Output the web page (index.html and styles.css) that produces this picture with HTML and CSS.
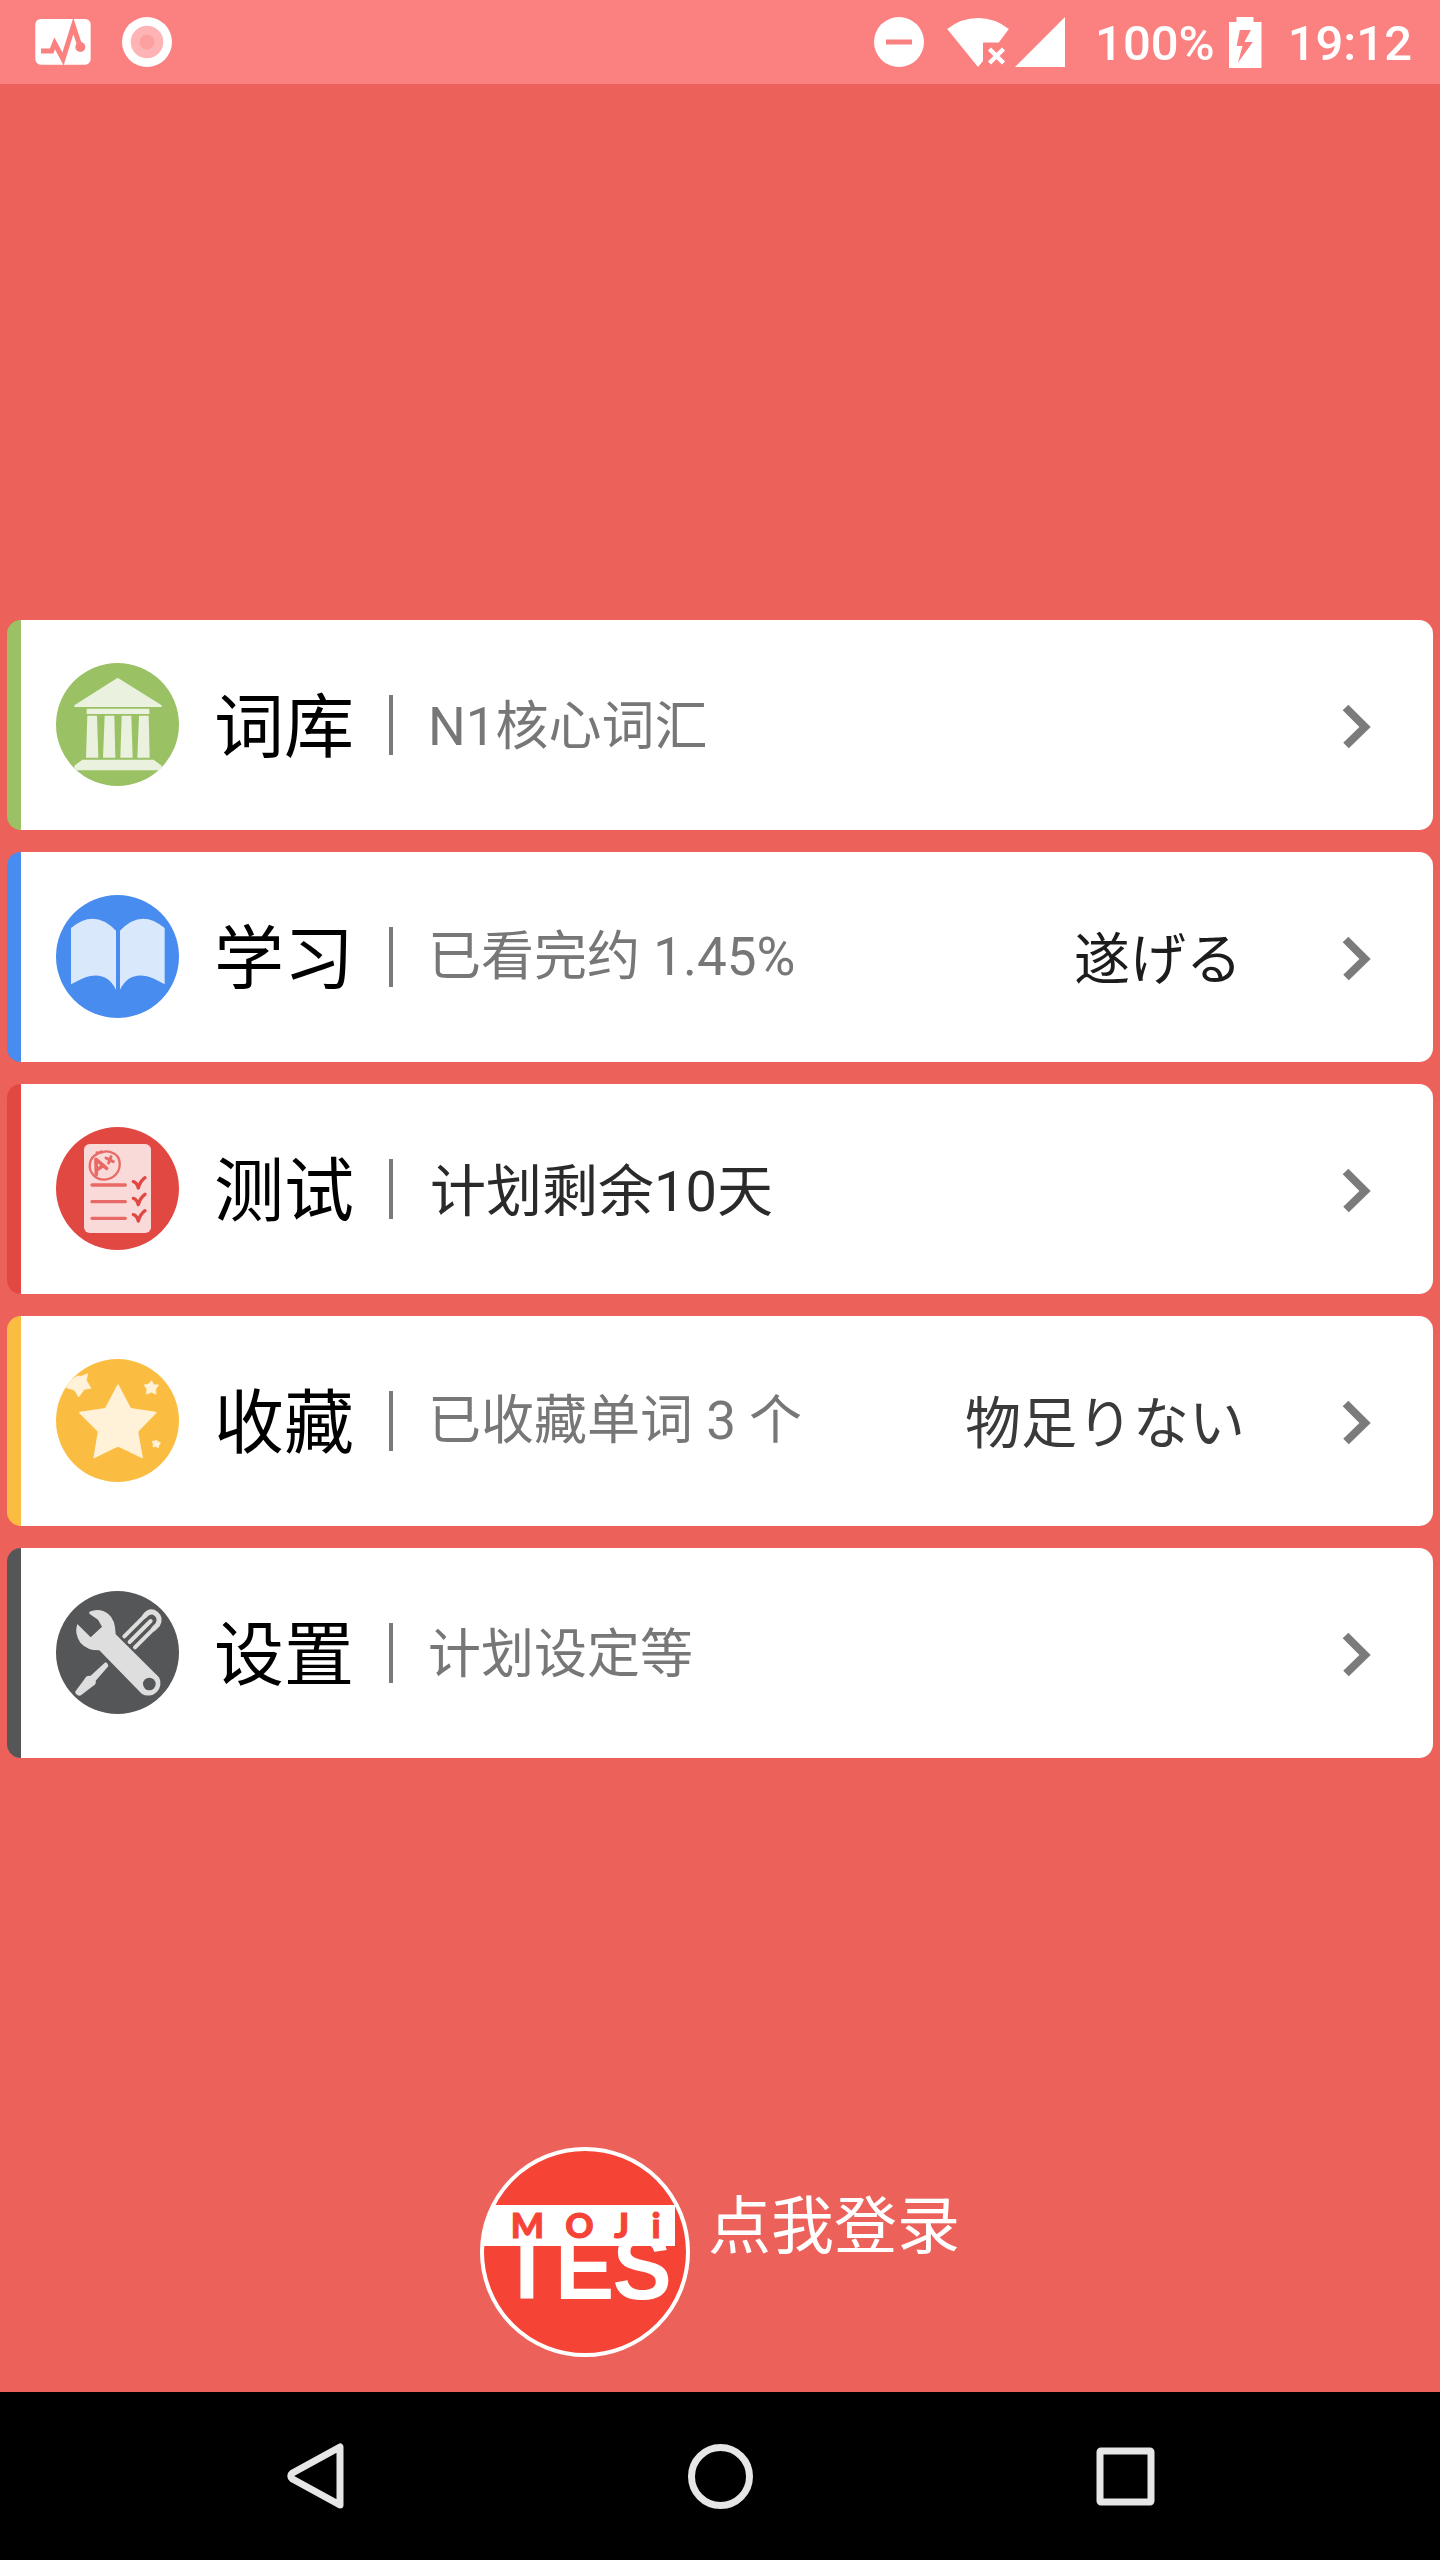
FILE: index.html
```html
<!DOCTYPE html>
<html lang="zh-CN">
<head>
<meta charset="utf-8">
<title>MOJi TEST</title>
<link rel="stylesheet" href="styles.css">
</head>
<body>
<header class="status">
  <div class="status-group">
    <svg class="ic-monitor" width="56" height="46" viewBox="105 57 168 138"><rect x="106" y="57" width="166" height="137" rx="16" fill="#fff"/><path d="M123 153h32l9-23 25 47 31-99 20 61" fill="none" stroke="#fb8080" stroke-width="15"/><circle cx="241" cy="141" r="15" fill="#fb8080"/></svg>
    <svg class="ic-record" width="50" height="50" viewBox="0 0 50 50"><circle cx="25" cy="25" r="25" fill="#fff"/><circle cx="25" cy="25" r="16.3" fill="#feb4b4"/><circle cx="25" cy="25" r="7.5" fill="#fca0a0"/></svg>
  </div>
  <div class="status-group">
    <svg class="ic-dnd" width="50" height="50" viewBox="0 0 50 50"><circle cx="25" cy="25" r="25" fill="#fff"/><path d="M12 22.500h26v5H12z" fill="#fb8080"/></svg>
    <svg class="ic-wifi" width="62" height="50" viewBox="947 17 62 50"><path d="M978 67L947.200 29Q961 18 978 18T1008.800 29L998.800 42.500H983V61Z" fill="#fff"/><path d="M989.500 49l14 14m0-14l-14 14" stroke="#fff" stroke-width="4.500"/></svg>
    <svg class="ic-cell" width="50" height="50" viewBox="0 0 50 50"><path d="M0 50L50 0v50z" fill="#fff"/></svg>
    <span class="status-text battery-text">100%</span>
    <svg class="ic-battery" width="33" height="51" viewBox="1229.500 16 33 51"><path fill-rule="evenodd" d="M1237 16h17v5h8v46h-32.500V21h7.500zM1240.300 29l-3.100 16h5.800l-4.600 16.700L1253.300 41h-8.400L1251.400 29z" fill="#fff"/></svg>
    <span class="status-text">19:12</span>
  </div>
</header>

<main class="menu">
  <a class="card card-green">
    <svg class="card-icon" viewBox="168 189 369 369"><circle cx="352.500" cy="373.500" r="184.500" fill="#9ac163"/><path d="M353 233L485 316v5H223v-5zM260 326h188v16H260zM262 347h29l4 126h-37zM314 347h29l3 126h-37zM365 347h29l4 126h-37zM417 347h29l3 126h-37zM247 479h214l24 18v8l-6 6H229l-6-8v-6z" fill="#eaf1df"/></svg>
    <h2 class="card-title">词库</h2>
    <span class="divider"></span>
    <span class="card-sub low">N1核心词汇</span>
    <svg class="chevron" width="29" height="46" viewBox="0 0 29 46"><path d="M3.500 3.500L23 23 4 41.500" fill="none" stroke="#7b7b7b" stroke-width="8"/></svg>
  </a>
  <a class="card card-blue">
    <svg class="card-icon" viewBox="168 165 369 369"><circle cx="352.500" cy="349.500" r="184.500" fill="#478cee"/><path d="M213 264Q284 204 348 272V449Q317 387 246 416L213 433zM494 264Q423 204 360 272V449Q391 387 462 416L494 433z" fill="#dae8fb"/></svg>
    <h2 class="card-title">学习</h2>
    <span class="divider"></span>
    <span class="card-sub">已看完约 1.45%</span>
    <span class="card-word word-dark">遂げる</span>
    <svg class="chevron" width="29" height="46" viewBox="0 0 29 46"><path d="M3.500 3.500L23 23 4 41.500" fill="none" stroke="#7b7b7b" stroke-width="8"/></svg>
  </a>
  <a class="card card-red">
    <svg class="card-icon" viewBox="168 171 369 369"><circle cx="352.500" cy="355.500" r="184.500" fill="#e24842"/><rect x="252" y="222" width="201" height="267" rx="17" fill="#f9dad9"/><g fill="none" stroke="#e86a66" stroke-linecap="round" stroke-linejoin="round"><path d="M276 345h100M276 395h100M276 445h100" stroke-width="10"/><path d="M290 247q8 3 14-3M294 251C266 262 262 297 281 316S331 332 348 313 362 261 343 251 314 243 300 249" stroke-width="7"/><path d="M289 313L288 268 320 295M289 301L309 287" stroke-width="11"/><path d="M318 264L340 275M333 260L326 279" stroke-width="9"/><path d="M400 335q10 2 15 19q5-20 20-31M400 385q10 2 15 19q5-20 20-31M400 434q10 2 15 19q5-20 20-31" stroke="#e24842" stroke-width="10"/></g></svg>
    <h2 class="card-title">测试</h2>
    <span class="divider"></span>
    <span class="card-sub card-plan">计划剩余10天</span>
    <svg class="chevron" width="29" height="46" viewBox="0 0 29 46"><path d="M3.500 3.500L23 23 4 41.500" fill="none" stroke="#7b7b7b" stroke-width="8"/></svg>
  </a>
  <a class="card card-yellow">
    <svg class="card-icon" viewBox="168 177 369 369"><circle cx="352.500" cy="361.500" r="184.500" fill="#fbbd41"/><g fill="#fff2d9" stroke="#fff2d9" stroke-linejoin="round"><path d="M354 256L388 321Q390 326 396 327L467 338 415 391Q412 395 413 400L426 472 361 440Q354 437 347 440L283 472 295 400Q296 395 293 391L240 338 312 327Q318 326 320 321z" stroke-width="5"/><path d="M455 242l6 12 15 1-9 12 1 16-13-6-16 5 2-15-9-12 14-3zM469 420l5 5 8 4-5 6-2 9-7-5-9 2 1-9-4-8 9-1z" stroke-width="2"/><path d="M199 263q13-26 34-35l10 1 20-8-4 20 14 24-20 3-17 23-12-20z" stroke-width="2"/></g></svg>
    <h2 class="card-title">收藏</h2>
    <span class="divider"></span>
    <span class="card-sub">已收藏单词 3 个</span>
    <span class="card-word">物足りない</span>
    <svg class="chevron" width="29" height="46" viewBox="0 0 29 46"><path d="M3.500 3.500L23 23 4 41.500" fill="none" stroke="#7b7b7b" stroke-width="8"/></svg>
  </a>
  <a class="card card-gray">
    <svg class="card-icon" viewBox="168 183 369 369"><circle cx="352.500" cy="367.500" r="184.500" fill="#555658"/><path d="M268 245Q300 232 325 252 346 268 347 313L477 442A37 37 0 0 1 425 491L298 361Q263 362 241 338 222 310 232 282L272 322 306 290 294 269 268 251z" fill="#dedede"/><circle cx="448" cy="462" r="19" fill="#555658"/><path d="M316 397q8 2 9 12l-38 43q3 10-8 16L244 495q-5 5-12 0-9-5-5-12l29-39q3-8 16-7z" fill="#dedede"/><path d="M373 319L436 256M389 336L452 273M405 352L468 289" fill="none" stroke="#dedede" stroke-width="12" stroke-linecap="round"/><path d="M434 258q17-20 34-7 16 14 5 33l-12 12" fill="none" stroke="#dedede" stroke-width="15" stroke-linecap="round"/></svg>
    <h2 class="card-title">设置</h2>
    <span class="divider"></span>
    <span class="card-sub low">计划设定等</span>
    <svg class="chevron" width="29" height="46" viewBox="0 0 29 46"><path d="M3.500 3.500L23 23 4 41.500" fill="none" stroke="#7b7b7b" stroke-width="8"/></svg>
  </a>
</main>

<section class="account">
  <svg class="logo" width="210" height="210" viewBox="480 2147 210 210">
    <clipPath id="disc"><circle cx="585" cy="2252" r="103"/></clipPath>
    <circle cx="585" cy="2252" r="103" fill="#f54336"/>
    <path d="M480 2205h195v41H480z" fill="#fff" clip-path="url(#disc)"/>
    <g class="logo-test" transform="scale(.965 1)"><text x="546.100" y="2299">T</text><text x="605.700" y="2299">E</text><text x="665.300" y="2299">S</text></g>
    <g class="logo-moji"><text x="527.500" y="2238">M</text><text x="579.500" y="2238">O</text><text x="621.500" y="2238">J</text><text x="656" y="2238">i</text></g>
    <circle cx="585" cy="2252" r="103" fill="none" stroke="#fff" stroke-width="4"/>
  </svg>
  <span class="login">点我登录</span>
</section>

<nav class="navbar">
  <svg width="66" height="66" viewBox="283 2443.500 66 66"><path d="M340 2447.500V2505.500L292.500 2479.500Q289 2476.500 292.500 2473.500z" fill="none" stroke="#e6e6e6" stroke-width="7" stroke-linejoin="round"/></svg>
  <svg width="66" height="66" viewBox="0 0 66 66"><circle cx="32.500" cy="33.500" r="29" fill="none" stroke="#e6e6e6" stroke-width="7"/></svg>
  <svg width="66" height="66" viewBox="0 0 66 66"><rect x="7" y="8" width="51" height="51" rx="1" fill="none" stroke="#e6e6e6" stroke-width="7" stroke-linejoin="round"/></svg>
</nav>
</body>
</html>
```
FILE: styles.css
```css
* { box-sizing: border-box; }

body {
  margin: 0;
  width: 1440px;
  height: 2560px;
  display: flex;
  flex-direction: column;
  background: #ec615a;
  font-family: Roboto, "Noto Sans CJK SC", sans-serif;
}

svg { display: block; flex: none; }

.status {
  height: 84px;
  flex: none;
  display: flex;
  justify-content: space-between;
  align-items: center;
  padding: 0 28px 0 35px;
  background: #fb8080;
  color: #fff;
}
.status-group { display: flex; align-items: center; }
.ic-record { margin-left: 31px; }
.ic-wifi { margin-left: 23px; }
.ic-cell { margin-left: 6px; }
.ic-battery { margin: 0 26px 0 14px; }
.status-text {
  font-size: 49px;
  font-weight: 500;
  line-height: 60px;
  padding-top: 4px;
}
.battery-text { margin-left: 30px; }

.menu {
  margin-top: 536px;
  padding: 0 7px;
  display: flex;
  flex-direction: column;
  gap: 22px;
}
.card {
  height: 210px;
  display: flex;
  align-items: center;
  padding: 0 62px 0 35px;
  border-left: 14px solid;
  border-radius: 14px;
  background: #fff;
}
.card-green { border-color: #9ac163; }
.card-blue { border-color: #478cee; }
.card-red { border-color: #e24842; }
.card-yellow { border-color: #fbbd41; }
.card-gray { border-color: #555658; }

.card-icon { width: 123px; height: 123px; margin-top: -1px; }
.card-title {
  width: 140px;
  margin: 6px 0 0 35px;
  font-size: 70px;
  font-weight: 400;
  line-height: 100px;
  white-space: nowrap;
  color: #000;
}
.divider { width: 4px; height: 60px; margin-left: 35px; background: #7a7a7a; }
.card-sub {
  margin-left: 35px;
  font-size: 53px;
  line-height: 80px;
  white-space: nowrap;
  color: #777;
}
.low { margin-top: 3px; }
.card-plan { margin: 6px 0 0 37px; font-size: 56px; color: #2a2a2a; }
.card-word {
  margin: 6px 97px 0 auto;
  font-size: 56px;
  line-height: 80px;
  white-space: nowrap;
  color: #3a3a3a;
}
.word-dark { color: #1c1c1c; margin-right: 100px; }
.chevron { margin: 4px 0 0 auto; }
.card-word + .chevron { margin-left: 0; }

.account {
  margin-top: 389px;
  padding-left: 480px;
  display: flex;
  align-items: flex-start;
}
.logo-test {
  font: 700 92px "Liberation Sans", sans-serif;
  fill: #fff;
  text-anchor: middle;
}
.logo-moji {
  font: 900 35px Lato, sans-serif;
  fill: #f54336;
  stroke: #f54336;
  stroke-width: 1px;
  text-anchor: middle;
}
.login {
  margin: 40px 0 0 18px;
  font-size: 63px;
  line-height: 80px;
  color: #fff;
}

.navbar {
  margin-top: auto;
  height: 168px;
  display: flex;
  align-items: center;
  justify-content: space-between;
  padding: 0 281px 0 283px;
  background: #000;
}
```
